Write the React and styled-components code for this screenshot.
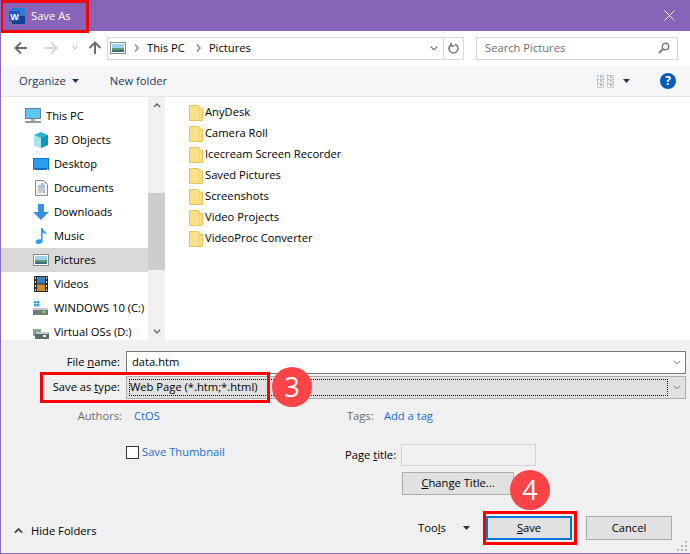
import React from "react";
import styled, { createGlobalStyle } from "styled-components";

const NAV_ITEMS = [
  { label: "This PC", icon: "pc", depth: 0 },
  { label: "3D Objects", icon: "cube", depth: 1 },
  { label: "Desktop", icon: "desktop", depth: 1 },
  { label: "Documents", icon: "doc", depth: 1 },
  { label: "Downloads", icon: "download", depth: 1 },
  { label: "Music", icon: "music", depth: 1 },
  { label: "Pictures", icon: "picture", depth: 1, active: true },
  { label: "Videos", icon: "video", depth: 1 },
  { label: "WINDOWS 10 (C:)", icon: "drive", depth: 1 },
  { label: "Virtual OSs (D:)", icon: "share", depth: 1 },
];

const FOLDERS = [
  "AnyDesk",
  "Camera Roll",
  "Icecream Screen Recorder",
  "Saved Pictures",
  "Screenshots",
  "Video Projects",
  "VideoProc Converter",
];

const NavIcon = ({ type }) => {
  switch (type) {
    case "pc":
      return (
        <svg width="16" height="16" viewBox="0 0 16 16">
          <rect x="0.5" y="0.5" width="15" height="10" fill="#5cc6f2" stroke="#6d7f8c" />
          <rect x="6" y="11" width="4" height="2" fill="#9fb0bb" />
          <rect x="0" y="13" width="16" height="2" fill="#8c9aa5" />
        </svg>
      );
    case "cube":
      return (
        <svg width="16" height="16" viewBox="0 0 16 16">
          <path d="M8 0l7 3v10l-7 3-7-3V3z" fill="#2fb4cf" />
          <path d="M1 3l7 3v10l-7-3z" fill="#a6e6ee" />
          <path d="M8 6l7-3v10l-7 3z" fill="#1793b6" />
        </svg>
      );
    case "desktop":
      return (
        <svg width="16" height="14" viewBox="0 0 16 14">
          <rect x="0" y="1" width="16" height="12" fill="#0f6fc6" />
          <rect x="1" y="2" width="14" height="9" fill="#2b9cf0" />
          <rect x="1" y="12" width="1" height="1" fill="#fff" />
          <rect x="14" y="12" width="1" height="1" fill="#fff" />
        </svg>
      );
    case "doc":
      return (
        <svg width="13" height="16" viewBox="0 0 13 16">
          <path d="M.5.5h8l4 4v11H.5z" fill="#f4f6f8" stroke="#7d8a96" />
          <path d="M6 4h3M3 6h7" stroke="#4a90d9" />
          <path d="M3 8h7M3 10h7" stroke="#8b99a6" />
          <path d="M3 12h4" stroke="#c0a060" />
          <path d="M8 12h2" stroke="#55646f" />
        </svg>
      );
    case "download":
      return (
        <svg width="16" height="16" viewBox="0 0 16 16">
          <path d="M5 0h6v8h5l-8 8-8-8h5z" fill="#3a8fe0" />
        </svg>
      );
    case "music":
      return (
        <svg width="13" height="16" viewBox="0 0 13 16">
          <path d="M6 0h1.6c.4 3 4.4 3.6 3.6 8-.4-2-2-3-3.6-3.4V13c0 2-2 3-4.200 3C1.600 16 .5 15 .5 13.700.5 12 2.600 11 6 11.400z" fill="#2d9cf0" />
        </svg>
      );
    case "picture":
      return (
        <svg width="16" height="12" viewBox="0 0 16 12">
          <rect x="0.5" y="0.5" width="15" height="11" fill="#fff" stroke="#7e8a94" />
          <rect x="2" y="2" width="12" height="4" fill="#9fd0ec" />
          <rect x="2" y="6" width="12" height="2" fill="#5f9a78" />
          <rect x="2" y="8" width="12" height="2" fill="#3f6f78" />
        </svg>
      );
    case "video":
      return (
        <svg width="14" height="16" viewBox="0 0 14 16">
          <rect width="14" height="16" fill="#2a2a2a" />
          <rect x="3" y="1" width="8" height="6.500" fill="#3a7fc0" />
          <rect x="3" y="8.500" width="8" height="6.500" fill="#d08a30" />
          <path d="M1 1h1v2H1zM1 5h1v2H1zM1 9h1v2H1zM1 13h1v2H1zM12 1h1v2h-1zM12 5h1v2h-1zM12 9h1v2h-1zM12 13h1v2h-1z" fill="#ddd" />
        </svg>
      );
    case "drive":
      return (
        <svg width="16" height="14" viewBox="0 0 16 14">
          <path d="M1 0h2.500v2.500H1zM4 0h2.500v2.500H4zM1 3h2.500v2.500H1zM4 3h2.500v2.500H4z" fill="#18a5e8" />
          <rect x="0" y="8" width="15" height="6" fill="#6f7b80" />
          <rect x="0" y="7" width="15" height="2" fill="#c4cbce" />
          <rect x="9" y="10" width="3" height="2" fill="#7ee04e" />
        </svg>
      );
    default:
      return (
        <svg width="16" height="14" viewBox="0 0 16 14">
          <rect x="0" y="4" width="8" height="7" fill="#7fa890" />
          <rect x="2" y="8" width="14" height="6" fill="#5e6a70" />
          <rect x="3" y="7" width="12" height="2" fill="#c4cbce" />
          <rect x="10" y="10" width="3" height="2" fill="#e8eef0" />
        </svg>
      );
  }
};

const Chevron = ({ up, size = 10, color = "#555", weight = 1.6 }) => (
  <svg width={size} height={size * 0.6} viewBox="0 0 10 6">
    <path
      d={up ? "M1 5.200l4-4 4 4" : "M1 .8l4 4 4-4"}
      fill="none"
      stroke={color}
      strokeWidth={weight}
    />
  </svg>
);

const Arrow = ({ dir, color }) => {
  const d = {
    left: "M13 7H2M7 1.500L1.500 7 7 12.500",
    right: "M1 7h11M7 1.500L12.500 7 7 12.500",
    up: "M7 13V2M1.500 7L7 1.500 12.500 7",
  }[dir];
  return (
    <svg width="14" height="14" viewBox="0 0 14 14">
      <path d={d} fill="none" stroke={color} strokeWidth="2" />
    </svg>
  );
};

const CrumbIcon = () => (
  <svg width="5" height="8" viewBox="0 0 5 8">
    <path d="M1 .5L4 4 1 7.500" fill="none" stroke="#8a8a8a" strokeWidth="1.500" />
  </svg>
);

const FolderIcon = () => (
  <svg width="14" height="16" viewBox="0 0 14 16">
    <path d="M.5.500h9l1 1.500v1h3v12.500H.5z" fill="#fbe08c" stroke="#e8c35a" />
    <path d="M10 3v12" stroke="#f3cf6e" />
  </svg>
);

const Caret = ({ color = "#1e395b" }) => (
  <svg width="7" height="4" viewBox="0 0 7 4">
    <path d="M0 0h7L3.500 4z" fill={color} />
  </svg>
);

const Annotated = ({ letter, children }) => (
  <>
    <Underlined>{letter}</Underlined>
    {children}
  </>
);

const App = () => (
  <Dialog>
    <GlobalStyle />
    <TitleBar>
      <svg width="16" height="16" viewBox="0 0 16 16">
        <rect x="3" y="0" width="13" height="16" fill="#2b7cd3" />
        <rect x="3" y="8" width="13" height="8" fill="#103f91" />
        <rect x="0" y="3" width="11" height="10" fill="#185abd" />
        <text x="5.500" y="11.500" fontSize="9" fontWeight="700" fontFamily="Liberation Sans" fill="#fff" textAnchor="middle">
          W
        </text>
      </svg>
      <TitleText>Save As</TitleText>
      <CloseIcon width="11" height="11" viewBox="0 0 11 11">
        <path d="M.5.500l10 10M10.500.500l-10 10" stroke="#fff" strokeWidth="1" />
      </CloseIcon>
    </TitleBar>

    <NavBar>
      <NavButtons>
        <Arrow dir="left" color="#6d6d6d" />
        <Arrow dir="right" color="#d4d4d4" />
        <Chevron size={6} color="#a8a8a8" />
        <Arrow dir="up" color="#6d6d6d" />
      </NavButtons>
      <AddressBox>
        <NavIcon type="picture" />
        <CrumbIcon />
        <RowLabel>This PC</RowLabel>
        <CrumbIcon />
        <RowLabel>Pictures</RowLabel>
        <AddressEnd>
          <Chevron size={8} color="#6d6d6d" />
        </AddressEnd>
        <RefreshCell>
          <svg width="12" height="12" viewBox="0 0 12 12">
            <path d="M4 2.200a4.500 4.500 0 1 0 3 0" fill="none" stroke="#7a7a7a" strokeWidth="1.600" />
            <path d="M3 .5v3.500h3.500" fill="none" stroke="#7a7a7a" strokeWidth="1.300" />
          </svg>
        </RefreshCell>
      </AddressBox>
      <SearchBox>
        <RowLabel>Search Pictures</RowLabel>
        <svg width="12" height="12" viewBox="0 0 12 12">
          <circle cx="7.500" cy="4.500" r="3.200" fill="none" stroke="#7a7a7a" strokeWidth="1.400" />
          <path d="M5 7L1 11" stroke="#7a7a7a" strokeWidth="2" />
        </svg>
      </SearchBox>
    </NavBar>

    <ToolBar>
      <ToolButton>
        <RowLabel>Organize</RowLabel>
        <Caret />
      </ToolButton>
      <ToolButton>
        <RowLabel>New folder</RowLabel>
      </ToolButton>
      <ToolSpacer />
      <svg width="17" height="13" viewBox="0 0 17 13">
        <path d="M.5.500h6v12h-6zM.5 4.500h6M.5 8.500h6M10.500.500h6v12h-6zM10.500 4.500h6M10.500 8.500h6" fill="none" stroke="#b0b4b8" strokeDasharray="1.500 .8" />
        <path d="M3 2h2M3 6h2M13 2h2M13 6h2" stroke="#5b8fc7" />
        <path d="M3 10h2M13 10h2" stroke="#d0554a" />
      </svg>
      <ViewCaret>
        <Caret />
      </ViewCaret>
      <HelpBadge>?</HelpBadge>
    </ToolBar>

    <Browser>
      <Sidebar>
        <NavList>
          {NAV_ITEMS.map((item) => (
            <NavRow key={item.label} $depth={item.depth} $active={item.active}>
              <NavIconSlot>
                <NavIcon type={item.icon} />
              </NavIconSlot>
              <RowLabel>{item.label}</RowLabel>
            </NavRow>
          ))}
        </NavList>
        <ScrollBar>
          <ScrollEnd>
            <Chevron up size={8} color="#555" />
          </ScrollEnd>
          <ScrollThumb />
          <ScrollEnd>
            <Chevron size={8} color="#555" />
          </ScrollEnd>
        </ScrollBar>
      </Sidebar>
      <FileList>
        {FOLDERS.map((name) => (
          <FileRow key={name}>
            <FolderIcon />
            <RowLabel>{name}</RowLabel>
          </FileRow>
        ))}
      </FileList>
    </Browser>

    <Panel>
      <FieldRow>
        <FieldLabel>
          File <Annotated letter="n">ame:</Annotated>
        </FieldLabel>
        <NameInput>
          <RowLabel>data.htm</RowLabel>
          <Chevron size={8} color="#555" weight={1} />
        </NameInput>
      </FieldRow>
      <FieldRow>
        <FieldLabel>
          Save as <Annotated letter="t">ype:</Annotated>
        </FieldLabel>
        <TypeSelect>
          <TypeFocus>Web Page (*.htm;*.html)</TypeFocus>
          <Chevron size={8} color="#555" weight={1} />
        </TypeSelect>
      </FieldRow>

      <MetaRow>
        <MetaLabel>Authors:</MetaLabel>
        <MetaLink>CtOS</MetaLink>
        <TagsLabel>Tags:</TagsLabel>
        <MetaLink>Add a tag</MetaLink>
      </MetaRow>

      <OptionsRow>
        <ThumbOption>
          <CheckBox />
          <RowLabel>
            <MetaLink>Save Thumbnail</MetaLink>
          </RowLabel>
        </ThumbOption>
        <TitleColumn>
          <PageTitleRow>
            <RowLabel>
              Page <Annotated letter="t">itle:</Annotated>
            </RowLabel>
            <PageTitleInput />
          </PageTitleRow>
          <ChangeTitleButton>
            <RowLabel>
              <Annotated letter="C">hange Title...</Annotated>
            </RowLabel>
          </ChangeTitleButton>
        </TitleColumn>
      </OptionsRow>

      <ActionRow>
        <HideFolders>
          <Chevron up size={9} color="#444" weight={2} />
          <RowLabel>Hide Folders</RowLabel>
        </HideFolders>
        <ToolsMenu>
          <RowLabel>
            Too<Annotated letter="l">s</Annotated>
          </RowLabel>
          <Caret color="#333" />
        </ToolsMenu>
        <SaveButton>
          <RowLabel>
            <Annotated letter="S">ave</Annotated>
          </RowLabel>
        </SaveButton>
        <CancelButton>
          <RowLabel>Cancel</RowLabel>
        </CancelButton>
      </ActionRow>
      <Grip width="11" height="11" viewBox="0 0 11 11">
        <path d="M8 0h2v2H8zM4 4h2v2H4zM8 4h2v2H8zM0 8h2v2H0zM4 8h2v2H4zM8 8h2v2H8z" fill="#b5b5b5" />
      </Grip>
    </Panel>

    <RedFrame $x={0} $y={0} $w={89} $h={33} />
    <RedFrame $x={40} $y={372} $w={230} $h={31} />
    <RedFrame $x={483} $y={511} $w={94} $h={34} />
    <StepBadge $x={272} $y={367}>3</StepBadge>
    <StepBadge $x={510} $y={470}>4</StepBadge>
  </Dialog>
);

const GlobalStyle = createGlobalStyle`
  html, body {
    margin: 0;
    padding: 0;
    background: #fff;
  }
  * {
    box-sizing: border-box;
  }
`;

const Dialog = styled.div`
  position: relative;
  width: 690px;
  height: 554px;
  overflow: hidden;
  display: flex;
  flex-direction: column;
  border-left: 1px solid #8c6cbd;
  border-bottom: 1px solid #8c6cbd;
  font-family: "Open Sans", "Noto Sans", sans-serif;
  font-size: 11.2px;
  color: #000;
  background: #f0f0f0;
`;

const RowLabel = styled.span`
  margin-top: -2px;
`;

const TitleBar = styled.div`
  height: 31px;
  margin-left: -1px;
  flex: none;
  display: flex;
  align-items: center;
  gap: 6px;
  padding: 0 15px 0 9px;
  background: #8764b8;
`;

const TitleText = styled.span`
  color: #fff;
  flex: 1;
`;

const CloseIcon = styled.svg`
  flex: none;
`;

const NavBar = styled.div`
  height: 35px;
  flex: none;
  display: flex;
  align-items: center;
  padding: 0 11px 1px 13px;
  background: #fff;
`;

const NavButtons = styled.div`
  width: 93px;
  flex: none;
  display: flex;
  align-items: center;
  gap: 16px;
  svg:nth-child(3) {
    margin-left: -2px;
  }
  svg:nth-child(4) {
    margin-left: -6px;
  }
`;

const AddressBox = styled.div`
  width: 357px;
  height: 23px;
  flex: none;
  display: flex;
  align-items: center;
  gap: 8px;
  padding-left: 2px;
  border: 1px solid #d9d9d9;
  svg:nth-of-type(3) {
    margin-left: 3px;
  }
`;

const AddressEnd = styled.div`
  margin-left: auto;
  margin-right: -3px;
  padding-right: 0;
  display: flex;
  align-items: center;
`;

const RefreshCell = styled.div`
  width: 20px;
  height: 100%;
  display: flex;
  align-items: center;
  justify-content: center;
  border-left: 1px solid #d9d9d9;
`;

const SearchBox = styled.div`
  width: 202px;
  height: 23px;
  margin-left: 12px;
  flex: none;
  display: flex;
  align-items: center;
  justify-content: space-between;
  padding: 0 7px 0 8px;
  border: 1px solid #d9d9d9;
  color: #6d6d6d;
`;

const ToolBar = styled.div`
  height: 31px;
  flex: none;
  display: flex;
  align-items: center;
  padding: 0 14px 0 18px;
  background: #f5f6f7;
  border-bottom: 1px solid #e6e6e6;
  color: #1e395b;
`;

const ToolButton = styled.div`
  display: flex;
  align-items: center;
  gap: 6px;
  margin-right: 31px;
`;

const ToolSpacer = styled.div`
  flex: 1;
`;

const ViewCaret = styled.div`
  margin: 0 30px 0 9px;
  display: flex;
`;

const HelpBadge = styled.div`
  width: 16px;
  height: 16px;
  border-radius: 50%;
  background: #0a5bb5;
  color: #fff;
  font-weight: 700;
  font-size: 12px;
  line-height: 16px;
  text-align: center;
`;

const Browser = styled.div`
  height: 243px;
  flex: none;
  display: flex;
  background: #fff;
  overflow: hidden;
`;

const Sidebar = styled.div`
  width: 164px;
  flex: none;
  display: flex;
`;

const NavList = styled.div`
  width: 147px;
  flex: none;
  padding-top: 7px;
`;

const NavRow = styled.div`
  height: 24px;
  display: flex;
  align-items: center;
  white-space: nowrap;
  padding-left: ${(p) => (p.$depth ? 32 : 24)}px;
  background: ${(p) => (p.$active ? "#d9d9d9" : "transparent")};
`;

const NavIconSlot = styled.div`
  width: 16px;
  margin-right: 5px;
  flex: none;
  display: flex;
  justify-content: center;
`;

const ScrollBar = styled.div`
  width: 17px;
  flex: none;
  display: flex;
  flex-direction: column;
  background: #f0f0f0;
`;

const ScrollEnd = styled.div`
  height: 17px;
  flex: none;
  display: flex;
  align-items: center;
  justify-content: center;
`;

const ScrollThumb = styled.div`
  height: 77px;
  margin-top: 79px;
  margin-bottom: auto;
  background: #cdcdcd;
`;

const FileList = styled.div`
  flex: 1;
  padding: 5px 0 0 24px;
`;

const FileRow = styled.div`
  height: 21px;
  display: flex;
  align-items: center;
  gap: 2px;
`;

const Panel = styled.div`
  position: relative;
  flex: 1;
  display: flex;
  flex-direction: column;
  padding: 11px 4px 0 0;
  background: #f0f0f0;
`;

const FieldRow = styled.div`
  height: 25px;
  display: flex;
  align-items: flex-start;
`;

const FieldLabel = styled.div`
  width: 119px;
  height: 23px;
  line-height: 21px;
  flex: none;
  text-align: right;
  margin-right: 6px;
`;

const Underlined = styled.span`
  text-decoration: underline;
`;

const NameInput = styled.div`
  flex: 1;
  height: 23px;
  display: flex;
  align-items: center;
  justify-content: space-between;
  padding: 0 4px 0 5px;
  background: #fff;
  border: 1px solid #7a7a7a;
`;

const TypeSelect = styled.div`
  flex: 1;
  height: 23px;
  display: flex;
  align-items: center;
  padding: 2px 4px 2px 2px;
  background: #e1e1e1;
  border: 1px solid #adadad;
  gap: 5px;
`;

const TypeFocus = styled.div`
  flex: 1;
  height: 100%;
  line-height: 14px;
  padding-left: 0;
  border: 1px dotted #000;
`;

const MetaRow = styled.div`
  margin-top: 7px;
  height: 16px;
  display: flex;
  align-items: center;
  padding-bottom: 2px;
`;

const MetaLabel = styled.span`
  width: 121px;
  flex: none;
  text-align: right;
  margin-right: 12px;
  color: #6d6d6d;
`;

const TagsLabel = styled(MetaLabel)`
  width: 26px;
  margin: 0 11px 0 187px;
`;

const MetaLink = styled.span`
  color: #1a6fd0;
`;

const OptionsRow = styled.div`
  margin-top: 18px;
  height: 53px;
  display: flex;
  padding-left: 125px;
`;

const ThumbOption = styled.div`
  width: 219px;
  height: 20px;
  flex: none;
  display: flex;
  align-items: center;
  gap: 3px;
`;

const CheckBox = styled.div`
  width: 13px;
  height: 13px;
  flex: none;
  background: #fff;
  border: 1px solid #333;
`;

const TitleColumn = styled.div`
  display: flex;
  flex-direction: column;
  gap: 6px;
`;

const PageTitleRow = styled.div`
  display: flex;
  align-items: center;
  justify-content: space-between;
  width: 191px;
  height: 22px;
  margin-top: 2px;
`;

const PageTitleInput = styled.div`
  width: 135px;
  height: 22px;
  background: #f0f0f0;
  border: 1px solid #d4d4d4;
`;

const BaseButton = styled.div`
  display: flex;
  align-items: center;
  justify-content: center;
  background: #e1e1e1;
  border: 1px solid #adadad;
`;

const ChangeTitleButton = styled(BaseButton)`
  width: 112px;
  height: 23px;
  margin-left: 57px;
`;

const ActionRow = styled.div`
  margin-top: 21px;
  height: 24px;
  display: flex;
  align-items: center;
`;

const HideFolders = styled.div`
  display: flex;
  align-items: center;
  gap: 8px;
  width: 417px;
  padding-left: 13px;
  margin-top: 6px;
`;

const ToolsMenu = styled.div`
  width: 68px;
  display: flex;
  align-items: center;
  gap: 17px;
`;

const SaveButton = styled(BaseButton)`
  width: 86px;
  height: 24px;
  border: 2px solid #0078d7;
`;

const CancelButton = styled(BaseButton)`
  width: 86px;
  height: 24px;
  margin-left: 14px;
`;

const Grip = styled.svg`
  position: absolute;
  right: 2px;
  bottom: 1px;
`;

const RedFrame = styled.div`
  position: absolute;
  left: ${(p) => p.$x - 1}px;
  top: ${(p) => p.$y}px;
  width: ${(p) => p.$w}px;
  height: ${(p) => p.$h}px;
  border: 3px solid #ff0000;
`;

const StepBadge = styled.div`
  position: absolute;
  left: ${(p) => p.$x - 1}px;
  top: ${(p) => p.$y}px;
  width: 40px;
  height: 40px;
  border-radius: 50%;
  background: #fa4448;
  color: #fff;
  font-size: 27px;
  line-height: 40px;
  text-align: center;
`;

export default App;
